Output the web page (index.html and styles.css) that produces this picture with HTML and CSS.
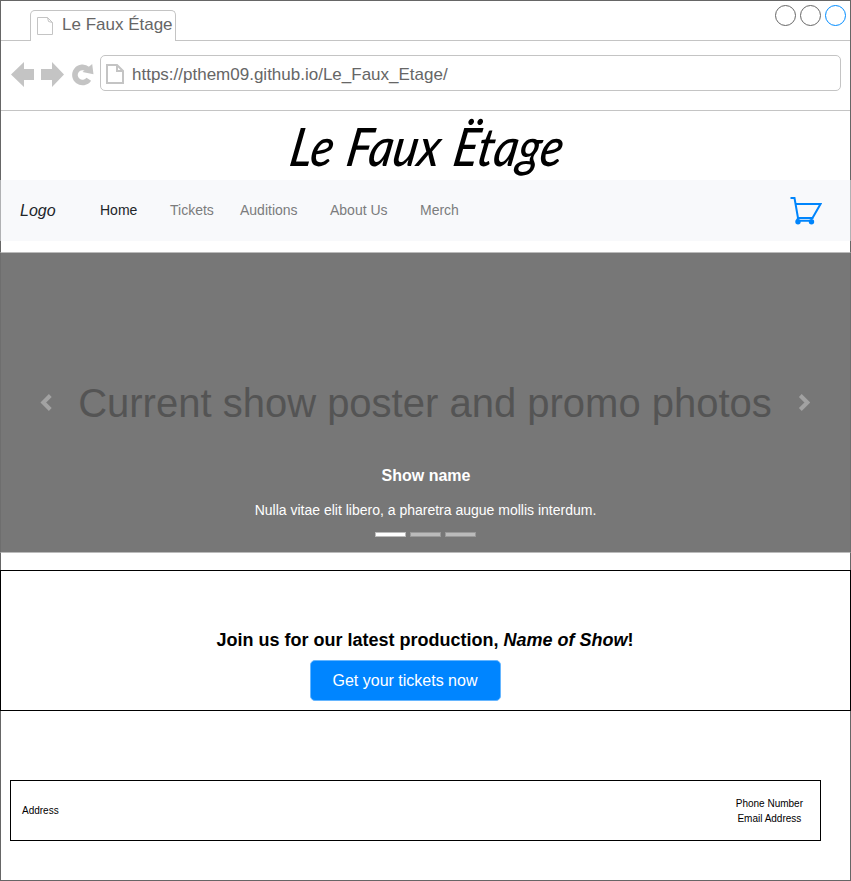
FILE: index.html
```html
<!DOCTYPE html>
<html lang="en">
<head>
<meta charset="utf-8">
<title>Le Faux Étage</title>
<link rel="stylesheet" href="styles.css">
</head>
<body>
<div class="window">
  <header class="tabbar">
    <div class="tab">
      <svg class="tab-icon" width="18" height="20" viewBox="0 0 18 20"><path d="M1.5 1.5H11.5L16.5 6.5V18.5H1.5ZM11.5 1.5L12.5 5.5L16.5 6.5" fill="#fff" stroke="#c4c4c4"/></svg>
      <span>Le Faux Étage</span>
    </div>
    <div class="controls"><i></i><i></i><i class="active"></i></div>
  </header>
  <div class="toolbar">
    <svg class="tools" width="84" height="26" viewBox="0 0 84 26" fill="#c4c4c4">
      <path d="M0 12.5L13 0V7H23V18H13V25ZM53 12.5L41 0V7H30V18H41V25Z"/>
      <path d="M77.8 17.2A7.6 7.6 0 1 1 76.5 7.2" fill="none" stroke="#c4c4c4" stroke-width="5.6"/>
      <path d="M81.2 2L82.5 12.2L71.5 10Z"/>
    </svg>
    <div class="address">
      <svg width="18" height="20" viewBox="0 0 18 20"><path d="M1 1H11L17 7V19H1ZM11 1V7H17" fill="#fff" stroke="#c4c4c4" stroke-width="2"/></svg>
      <span>https://pthem09.github.io/Le_Faux_Etage/</span>
    </div>
  </div>
  <h1 class="wordmark"><span>Le Faux Ëtage</span></h1>
  <nav class="nav">
    <a class="brand">Logo</a>
    <a class="link home">Home</a>
    <a class="link tickets">Tickets</a>
    <a class="link auditions">Auditions</a>
    <a class="link about">About Us</a>
    <a class="link">Merch</a>
    <svg class="cart" width="32" height="28" viewBox="0 0 32 28" fill="none" stroke="#0085fc" stroke-width="2"><path d="M.5 1H4.5L8 21H23.5M5 7H30.5L22.5 21M8 21L6.8 24M7.5 23.8H22"/><g fill="#0085fc" stroke="none"><circle cx="8" cy="24.8" r="2.7"/><circle cx="21.5" cy="24.8" r="2.7"/></g></svg>
  </nav>
  <section class="carousel">
    <div class="slide">
      <svg width="12" height="17" viewBox="0 0 12 17"><path d="M10.3 1.5L3.3 8.5L10.3 15.5" fill="none" stroke="#a2a2a2" stroke-width="4"/></svg>
      <span class="poster">Current show poster and promo photos</span>
      <svg width="12" height="17" viewBox="0 0 12 17"><path d="M2.3 1.5L9.3 8.5L2.3 15.5" fill="none" stroke="#a2a2a2" stroke-width="4"/></svg>
    </div>
    <h2>Show name</h2>
    <p>Nulla vitae elit libero, a pharetra augue mollis interdum.</p>
    <div class="indicators"><i class="active"></i><i></i><i></i></div>
  </section>
  <section class="cta">
    <h2>Join us for our latest production, <em>Name of Show</em>!</h2>
    <button>Get your tickets now</button>
  </section>
  <footer class="footer">
    <span>Address</span>
    <div class="contact"><span>Phone Number</span><span>Email Address</span></div>
  </footer>
</div>
</body>
</html>
```

FILE: styles.css
```css
* { box-sizing: border-box; }
body { margin: 0; background: #fff; font-family: "Liberation Sans", Arial, sans-serif; }
h1, h2, p { margin: 0; }
.window { position: relative; width: 851px; height: 881px; overflow: hidden; display: flex; flex-direction: column; }
.window::before { content: ""; position: absolute; inset: 0; border: 1px solid #666; pointer-events: none; }
.window > * { flex: none; }
.tabbar { height: 41px; border-bottom: 1px solid #c4c4c4; padding: 10px 5px 0 30px; display: flex; justify-content: space-between; }
.tab { width: 146px; height: 31px; border: 1px solid #c4c4c4; border-bottom: 0; border-radius: 5px 5px 0 0; background: #fff; display: flex; padding: 5px 0 0 5px; color: #666; font-size: 17px; line-height: 18px; white-space: nowrap; }
.tab span { margin-left: 8px; }
.controls { display: flex; gap: 4px; margin-top: -5px; }
.controls i { width: 21px; height: 21px; border: 1px solid #666; border-radius: 50%; }
.controls .active { border-color: #008cff; }
.toolbar { height: 70px; border-bottom: 1px solid #c4c4c4; padding: 14px 10px 0 11px; display: flex; }
.tools { margin: 7px 5px 0 0; }
.address { flex: 1; height: 36px; border: 1px solid #c4c4c4; border-radius: 5px; display: flex; align-items: center; padding: 0 5px; color: #666; font-size: 17px; }
.address svg { margin-top: 1px; }
.address span { margin-left: 8px; padding-top: 3px; }
.wordmark { height: 69px; padding-left: 288px; font: italic 500 53px/70px Lato, sans-serif; word-spacing: 3px; color: #000; white-space: nowrap; position: relative; z-index: 1; }
.wordmark span { display: inline-block; transform-origin: 0 76%; transform: skewX(-10deg) scaleX(.885); }
.nav { height: 61px; background: #f8f9fb; border: solid #b0b1b3; border-width: 0 1px; position: relative; display: flex; align-items: center; padding: 0 28px 0 19px; font-size: 14px; color: #7b7c7d; }
.link { padding-bottom: 1px; }
.brand { width: 80px; font-size: 16px; font-style: italic; color: #212529; }
.home { width: 70px; color: #212529; }
.tickets { width: 70px; }
.auditions { width: 90px; }
.about { width: 90px; }
.cart { margin-left: auto; }
.carousel { height: 301px; margin-top: 11px; position: relative; background: #777; border: 1px solid #6e6e6e; border-top-color: #bbb; border-bottom-color: #bbb; color: #fff; text-align: center; padding-top: 127px; }
.slide { height: 46px; display: flex; align-items: center; justify-content: space-between; padding: 0 40px 0 39px; }
.slide svg { margin-bottom: 2px; }
.poster { font-size: 40px; line-height: 46px; color: #545454; white-space: nowrap; }
.carousel h2 { font-size: 16px; line-height: 20px; margin-top: 40px; padding-left: 1px; }
.carousel p { font-size: 14px; line-height: 18px; margin-top: 15px; }
.indicators { display: flex; justify-content: center; gap: 4px; margin-top: 13px; }
.indicators i { width: 31px; height: 5px; background: #bbb; border: 1px solid #999; }
.indicators .active { background: #fff; border-color: #bbb; }
.cta { height: 141px; margin-top: 17px; position: relative; border: 1px solid #000; display: flex; flex-direction: column; padding: 58px 0 0; }
.cta h2 { font-size: 18px; line-height: 22px; text-align: center; padding-right: 1px; }
.cta button { width: 191px; height: 41px; margin: 9px 0 0 309px; padding: 0 1px 0 0; border: 1px solid #66b6ff; border-radius: 5px; background: #0085ff; color: #fff; font: 16px "Liberation Sans", sans-serif; }
.footer { width: 811px; height: 61px; margin: 69px 0 0 10px; border: 1px solid #000; display: flex; align-items: center; justify-content: space-between; padding: 0 17px 0 11px; font-size: 10px; color: #000; }
.contact { display: flex; flex-direction: column; align-items: center; line-height: 15px; }
```
